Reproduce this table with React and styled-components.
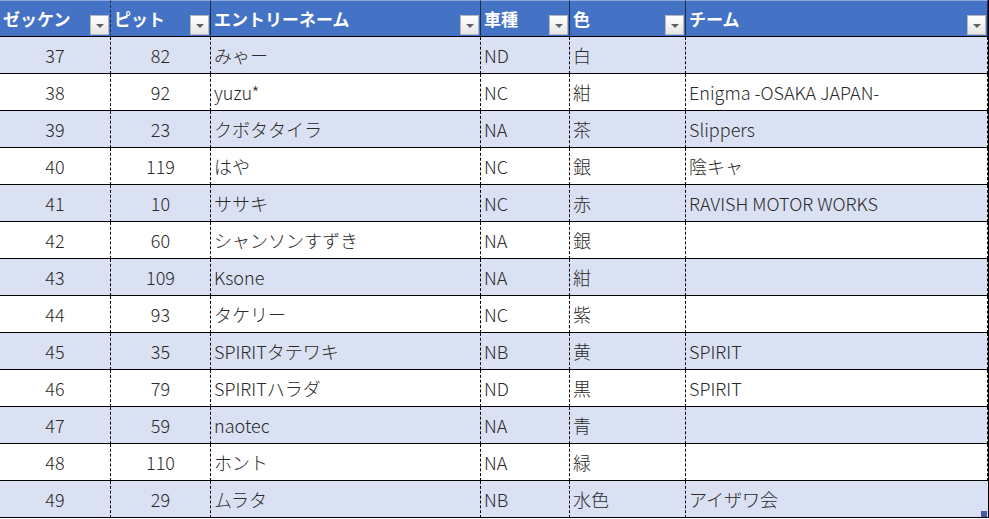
import React from "react";
import styled, { createGlobalStyle } from "styled-components";

const GlobalStyle = createGlobalStyle`
  html, body {
    margin: 0;
    padding: 0;
    background: #ffffff;
  }
  body {
    font-family: "Noto Sans CJK JP", "Noto Sans", sans-serif;
  }
`;

const COLS = "111px 100px 270px 89px 116px 302px";

const Sheet = styled.div`
  width: 989px;
  height: 519px;
  overflow: hidden;
  position: relative;
`;

const Grid = styled.div`
  display: grid;
  grid-template-columns: ${COLS};
  grid-auto-rows: 37px;
  width: 988px;
  border-right: 1px solid #000;
  box-sizing: content-box;
`;

const HeadCell = styled.div`
  position: relative;
  background: #4472c4;
  color: #ffffff;
  font-weight: 700;
  font-size: 17px;
  line-height: 35px;
  padding-left: 3px;
  box-sizing: border-box;
  border-bottom: 1px solid #000;
  border-right: 1px ${(p) => (p.$dashed ? "dashed" : "solid")} #1a2a4a;
  border-top: 1px solid #8faadc;
  white-space: nowrap;
`;

const FilterButton = styled.span`
  position: absolute;
  right: 1px;
  bottom: 1px;
  width: 19px;
  height: 20px;
  box-sizing: border-box;
  border: 1px solid #b8b8b8;
  background: linear-gradient(#ffffff, #e6e6e6);
  display: flex;
  align-items: center;
  justify-content: center;

  &::after {
    content: "";
    width: 0;
    height: 0;
    border-left: 4px solid transparent;
    border-right: 4px solid transparent;
    border-top: 4px solid #606060;
    margin-top: 2px;
  }
`;

const Cell = styled.div`
  background: ${(p) => (p.$band ? "#d9e1f2" : "#ffffff")};
  color: #2a2a2a;
  font-size: 18px;
  font-weight: 300;
  line-height: 36px;
  padding: 0 3px;
  box-sizing: border-box;
  border-bottom: 1px solid #000;
  border-right: 1px dashed #000;
  text-align: ${(p) => (p.$center ? "center" : "left")};
  white-space: nowrap;
  overflow: hidden;

  &:last-child {
    border-right: none;
  }
`;

const Handle = styled.span`
  position: absolute;
  right: 2px;
  bottom: 2px;
  width: 6px;
  height: 6px;
  background: #4a5aa8;
`;

const headers = [
  { label: "ゼッケン", dashed: true },
  { label: "ピット" },
  { label: "エントリーネーム" },
  { label: "車種" },
  { label: "色" },
  { label: "チーム" },
];

const rows = [
  [37, 82, "みゃー", "ND", "白", ""],
  [38, 92, "yuzu*", "NC", "紺", "Enigma -OSAKA JAPAN-"],
  [39, 23, "クボタタイラ", "NA", "茶", "Slippers"],
  [40, 119, "はや", "NC", "銀", "陰キャ"],
  [41, 10, "ササキ", "NC", "赤", "RAVISH MOTOR WORKS"],
  [42, 60, "シャンソンすずき", "NA", "銀", ""],
  [43, 109, "Ksone", "NA", "紺", ""],
  [44, 93, "タケリー", "NC", "紫", ""],
  [45, 35, "SPIRITタテワキ", "NB", "黄", "SPIRIT"],
  [46, 79, "SPIRITハラダ", "ND", "黒", "SPIRIT"],
  [47, 59, "naotec", "NA", "青", ""],
  [48, 110, "ホント", "NA", "緑", ""],
  [49, 29, "ムラタ", "NB", "水色", "アイザワ会"],
];

export default function App() {
  return (
    <>
      <GlobalStyle />
      <Sheet>
        <Grid>
          {headers.map((h) => (
            <HeadCell key={h.label} $dashed={h.dashed}>
              {h.label}
              <FilterButton />
            </HeadCell>
          ))}
          {rows.map((r, i) =>
            r.map((v, j) => (
              <Cell key={`${i}-${j}`} $band={i % 2 === 0} $center={j < 2}>
                {v}
              </Cell>
            ))
          )}
        </Grid>
        <Handle />
      </Sheet>
    </>
  );
}
